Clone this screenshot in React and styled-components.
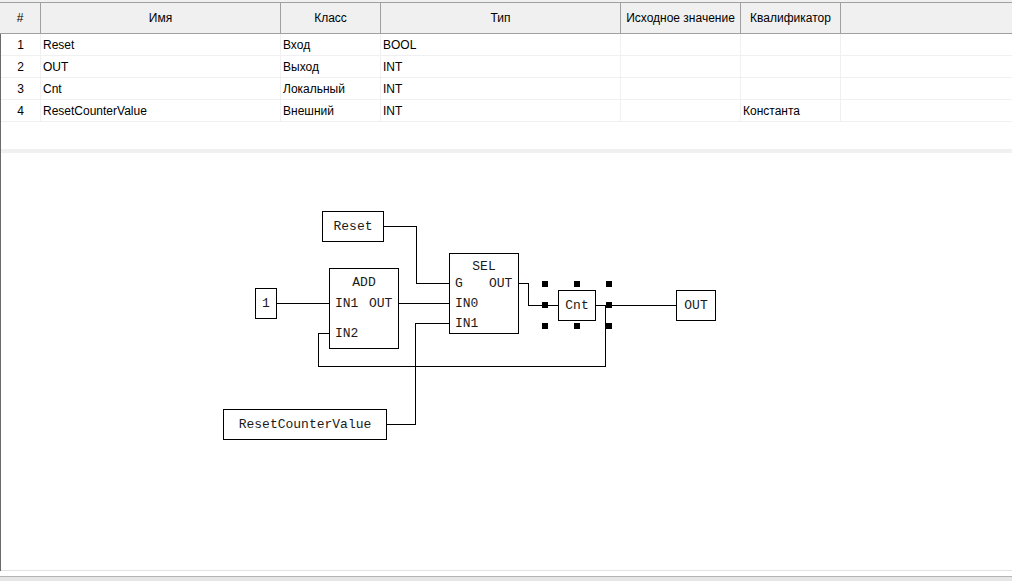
import React from 'react';
import styled, { createGlobalStyle } from 'styled-components';

const GlobalStyle = createGlobalStyle`
  html, body {
    margin: 0;
    padding: 0;
    background: #ffffff;
  }
  body {
    font-family: "Liberation Sans", Arial, sans-serif;
    font-size: 12px;
    color: #000;
  }
`;

const COLS = '41px 240px 100px 240px 120px 100px 1fr';

const Page = styled.div`
  width: 1012px;
  height: 581px;
  display: flex;
  flex-direction: column;
  overflow: hidden;
  background: #fff;
`;

const HeaderWrap = styled.div`
  flex-shrink: 0;
  padding-top: 2px;
  background: #f0f0f0;
`;

const HeaderRow = styled.div`
  display: grid;
  grid-template-columns: ${COLS};
  height: 30px;
  border-top: 1px solid #a0a0a0;
  border-bottom: 1px solid #a0a0a0;
  background: #f0f0f0;
`;

const HeaderCell = styled.div`
  display: flex;
  align-items: center;
  justify-content: center;
  border-right: ${p => (p.$last ? 'none' : '1px solid #a0a0a0')};
  white-space: nowrap;
  overflow: hidden;
`;

const Body = styled.div`
  flex: 1;
  display: flex;
  flex-direction: column;
  border-left: 1px solid #6a6a6a;
  min-height: 0;
`;

const TableBody = styled.div`
  flex-shrink: 0;
  height: 115px;
`;

const Row = styled.div`
  display: grid;
  grid-template-columns: 40px 240px 100px 240px 120px 100px 1fr;
  height: 21px;
  border-bottom: 1px solid #f0f0f0;
`;

const Cell = styled.div`
  display: flex;
  align-items: center;
  justify-content: ${p => (p.$center ? 'center' : 'flex-start')};
  padding-left: ${p => (p.$center ? '0' : '2px')};
  border-right: ${p => (p.$last ? 'none' : '1px solid #f0f0f0')};
  white-space: nowrap;
  overflow: hidden;
`;

const Splitter = styled.div`
  flex-shrink: 0;
  height: 4px;
  background: #f0f0f0;
`;

const Canvas = styled.div`
  flex: 1;
  min-height: 0;
  overflow: hidden;
  background: #fff;
  border-bottom: 1px solid #e3e3e3;

  svg {
    display: block;
  }
`;

const StatusGap = styled.div`
  flex-shrink: 0;
  height: 5px;
  background: #fff;
`;

const StatusBar = styled.div`
  flex-shrink: 0;
  height: 4px;
  border-top: 1px solid #b4b4b4;
  background: #e6e6e6;
`;

const headers = ['#', 'Имя', 'Класс', 'Тип', 'Исходное значение', 'Квалификатор', ''];

const rows = [
  ['1', 'Reset', 'Вход', 'BOOL', '', ''],
  ['2', 'OUT', 'Выход', 'INT', '', ''],
  ['3', 'Cnt', 'Локальный', 'INT', '', ''],
  ['4', 'ResetCounterValue', 'Внешний', 'INT', '', 'Константа'],
];

const boxes = [
  { x: 322, y: 211, x2: 383, y2: 241, label: 'Reset' },
  { x: 255, y: 288, x2: 276, y2: 318, label: '1' },
  { x: 558, y: 290, x2: 595, y2: 320, label: 'Cnt' },
  { x: 676, y: 290, x2: 715, y2: 320, label: 'OUT' },
  { x: 223, y: 409, x2: 386, y2: 439, label: 'ResetCounterValue' },
];

const blocks = [
  {
    x: 329, y: 268, x2: 398, y2: 348, name: 'ADD', nameY: 282,
    pins: [
      { t: 'IN1', x: 335, y: 303 },
      { t: 'OUT', x: 369, y: 303 },
      { t: 'IN2', x: 335, y: 333 },
    ],
  },
  {
    x: 449, y: 253, x2: 518, y2: 333, name: 'SEL', nameY: 266,
    pins: [
      { t: 'G', x: 455, y: 283 },
      { t: 'OUT', x: 489, y: 283 },
      { t: 'IN0', x: 455, y: 303 },
      { t: 'IN1', x: 455, y: 323 },
    ],
  },
];

const wires = [
  [[383, 226], [416, 226], [416, 283], [449, 283]],
  [[276, 303], [329, 303]],
  [[398, 303], [449, 303]],
  [[518, 283], [528, 283], [528, 305], [558, 305]],
  [[595, 305], [676, 305]],
  [[605, 305], [605, 366], [318, 366], [318, 333], [329, 333]],
  [[386, 424], [415, 424], [415, 323], [449, 323]],
];

const handles = [
  [545, 284], [577, 284], [609, 284],
  [545, 305], [609, 305],
  [545, 326], [577, 326], [609, 326],
];

const Diagram = () => (
  <svg width="1011" height="417" viewBox="1 153 1011 417" shapeRendering="crispEdges">
    <g fill="none" stroke="#000" strokeWidth="1">
      {wires.map((w, i) => (
        <polyline key={i} points={w.map(([x, y]) => `${x + 0.5},${y + 0.5}`).join(' ')} />
      ))}
      {[...boxes, ...blocks].map((b, i) => (
        <rect key={i} x={b.x + 0.5} y={b.y + 0.5} width={b.x2 - b.x} height={b.y2 - b.y} fill="#fff" />
      ))}
    </g>
    <g fontFamily='"Liberation Mono", "Courier New", monospace' fontSize="13" fill="#1a1a1a">
      {boxes.map((b, i) => (
        <text key={i} x={(b.x + b.x2 + 1) / 2} y={(b.y + b.y2 + 1) / 2} textAnchor="middle" dominantBaseline="central">
          {b.label}
        </text>
      ))}
      {blocks.map((b, i) => (
        <g key={i}>
          <text x={(b.x + b.x2 + 1) / 2} y={b.nameY} textAnchor="middle" dominantBaseline="central">{b.name}</text>
          {b.pins.map((p, j) => (
            <text key={j} x={p.x} y={p.y + 0.5} dominantBaseline="central">{p.t}</text>
          ))}
        </g>
      ))}
    </g>
    <g fill="#000">
      {handles.map(([x, y], i) => (
        <rect key={i} x={x - 3} y={y - 3} width="6" height="6" />
      ))}
    </g>
  </svg>
);

export default function App() {
  return (
    <Page>
      <GlobalStyle />
      <HeaderWrap>
        <HeaderRow>
          {headers.map((h, i) => (
            <HeaderCell key={i} $last={i === headers.length - 1}>{h}</HeaderCell>
          ))}
        </HeaderRow>
      </HeaderWrap>
      <Body>
        <TableBody>
          {rows.map((r, i) => (
            <Row key={i}>
              <Cell $center>{r[0]}</Cell>
              <Cell>{r[1]}</Cell>
              <Cell>{r[2]}</Cell>
              <Cell>{r[3]}</Cell>
              <Cell>{r[4]}</Cell>
              <Cell>{r[5]}</Cell>
              <Cell $last />
            </Row>
          ))}
        </TableBody>
        <Splitter />
        <Canvas>
          <Diagram />
        </Canvas>
      </Body>
      <StatusGap />
      <StatusBar />
    </Page>
  );
}
